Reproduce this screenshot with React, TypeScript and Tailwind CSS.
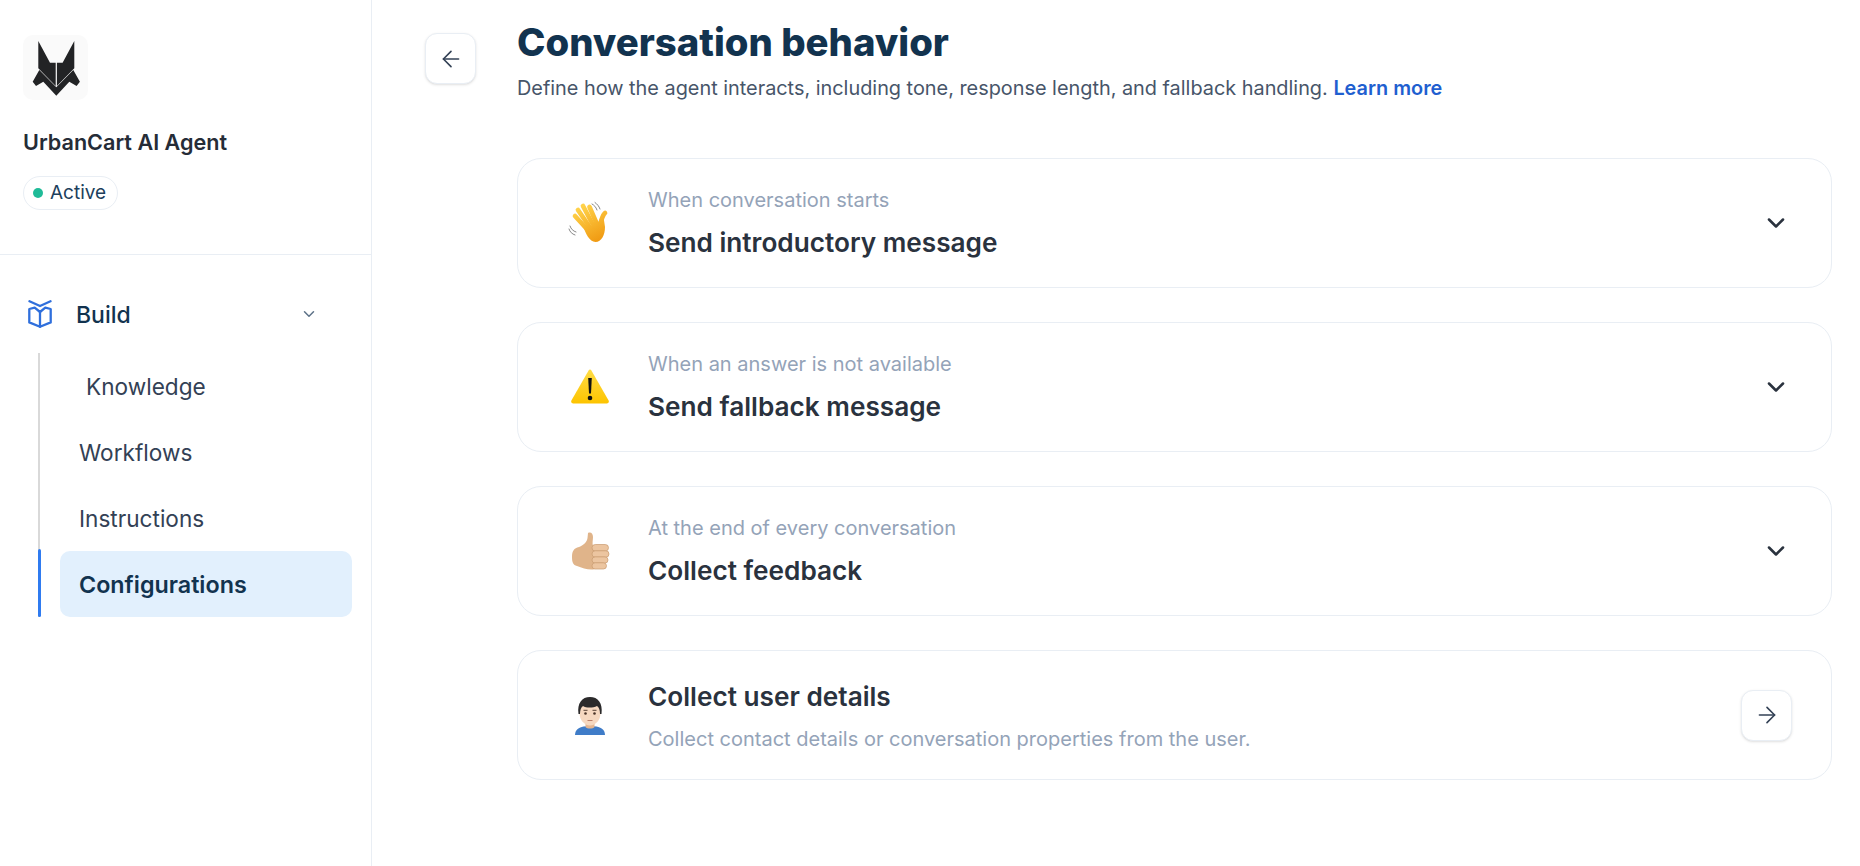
import React from "react";
import { ArrowLeft, ArrowRight, ChevronDown } from "lucide-react";

const FoxLogo = () => (
  <svg viewBox="23 35 65 65" className="h-[65px] w-[65px]">
    <path d="M38.3 41L50 62.7H55.7V86L38.3 68.3Z" fill="#222325" />
    <path d="M74.3 41L62.6 62.7H56.9V86L74.3 68.3Z" fill="#222325" />
    <path d="M32.7 81.7L39.3 70L56.3 87.3L73.3 70L79.9 81.7L76.6 86L69.3 81.7L56.3 95.7L43.3 81.7L36 86Z" fill="#222325" />
  </svg>
);

const BookIcon = () => (
  <svg viewBox="0 0 26 28" fill="none" className="h-[28px] w-[26px]" stroke="#2f6fdc" strokeWidth="2.3" strokeLinejoin="round" strokeLinecap="round">
    <path d="M2.5 1.3L13 6L23.5 1.3" />
    <path d="M7.7 7.6L2.3 9V22.4L13 26.8L23.7 22.4V9L18.3 7.6L13 12Z" />
    <path d="M13 12V26.8" />
  </svg>
);

const WaveEmoji = () => (
  <svg viewBox="0 0 44 44" className="h-[44px] w-[44px]" fill="none" strokeLinecap="round">
    <defs>
      <linearGradient id="hand" gradientUnits="userSpaceOnUse" x1="12" y1="6" x2="30" y2="40">
        <stop offset="0" stopColor="#ffd24a" />
        <stop offset="1" stopColor="#f09a12" />
      </linearGradient>
    </defs>
    <g stroke="#888" strokeWidth="1">
      <path d="M24 3C26 4 28 6 29 9" />
      <path d="M27 1.5C29 3 31 5 32 8" />
      <path d="M2 25C3 28 5 30 8 31" />
      <path d="M1 28C2 31 4 33 7 34" />
    </g>
    <g stroke="url(#hand)" strokeWidth="4.7">
      <path d="M7 15L18 27" />
      <path d="M10 9L21 25" />
      <path d="M15 5L24 22" />
      <path d="M21.5 6L28 21" />
      <path d="M37 12C34.5 14 34 18 32 23" />
    </g>
    <path d="M15 25L24 24L28 20L32 21L35.5 16L37 26C37 34 33.5 41 27.5 41C21.5 41 17.5 32 15 25Z" fill="url(#hand)" />
  </svg>
);

const WarningEmoji = () => (
  <svg viewBox="0 0 44 44" className="h-[44px] w-[44px]">
    <defs>
      <linearGradient id="warn" x1="0" y1="0" x2="0" y2="1">
        <stop offset="0" stopColor="#ffdc45" />
        <stop offset="1" stopColor="#fdc400" />
      </linearGradient>
    </defs>
    <path d="M20.6 5.5C21.3 4.3 22.7 4.3 23.4 5.5L40.6 35.6C41.3 37 40.5 38.4 39 38.4H5C3.5 38.4 2.7 37 3.4 35.6Z" fill="url(#warn)" />
    <path d="M20.2 13H23.8L23 28.5H21Z" fill="#111" />
    <circle cx="22" cy="33" r="2.3" fill="#111" />
  </svg>
);

const ThumbEmoji = () => (
  <svg viewBox="0 0 44 44" className="h-[44px] w-[44px]">
    <path d="M20 4C23 2.5 25 5 25 8C25 11 24 14 25 17L35 18V38L25 40.5C20 41 14 39 9 37C5 36 4 33 4 28C4 22 6 19 11 18C16 16 19 13 19.5 9Z" fill="#e0b48a" />
    <g fill="#ecc5a0" stroke="#c99b70" strokeWidth="0.7">
      <rect x="24" y="15.5" width="16.5" height="6.6" rx="3.3" />
      <rect x="24" y="21.8" width="17" height="6.4" rx="3.2" />
      <rect x="24" y="27.9" width="16" height="6.2" rx="3.1" />
      <rect x="24" y="33.8" width="14.5" height="6.2" rx="3.1" />
    </g>
  </svg>
);

const PersonEmoji = () => (
  <svg viewBox="0 0 44 44" className="h-[44px] w-[44px]">
    <path d="M7 42C7 36 12 33 22 33C32 33 37 36 37 42Z" fill="#3f7cc8" />
    <path d="M17.5 29H26.5V34C25 36 19 36 17.5 34Z" fill="#e3b591" />
    <ellipse cx="22" cy="20" rx="10.5" ry="12.5" fill="#f6d8c0" />
    <path d="M10.5 21C9 10 14 4 22 4C30 4 35 10 33.5 21L32 21C32 17 31 14.5 29 13C25 15 18 15 15 13C13 14.5 12 17 12 21Z" fill="#2b2a2b" />
    <circle cx="17.5" cy="20.5" r="1.3" fill="#4a3328" />
    <circle cx="26.5" cy="20.5" r="1.3" fill="#4a3328" />
    <path d="M15.5 17.3H19.5M24.5 17.3H28.5" stroke="#4a3328" strokeWidth="0.9" />
    <path d="M19.5 27.5H24.5" stroke="#b5755f" strokeWidth="0.9" />
  </svg>
);

const cards = [
  { emoji: <WaveEmoji />, sub: "When conversation starts", title: "Send introductory message" },
  { emoji: <WarningEmoji />, sub: "When an answer is not available", title: "Send fallback message" },
  { emoji: <ThumbEmoji />, sub: "At the end of every conversation", title: "Collect feedback" },
];

const App: React.FC = () => {
  return (
    <div className="flex h-[866px] overflow-hidden bg-white font-['Inter',sans-serif]">
      <aside className="w-[372px] shrink-0 border-r border-[#e9eef4]">
        <div className="h-[255px] border-b border-[#e9eef4] pl-[23px] pt-[35px]">
          <div className="h-[65px] w-[65px] rounded-[10px] bg-[#fafafa]">
            <FoxLogo />
          </div>
          <h2 className="mt-[26px] text-[21.6px] leading-[32px] font-semibold text-[#252c37]">UrbanCart AI Agent</h2>
          <div className="mt-[18px] inline-flex h-[34px] items-center gap-[7px] rounded-full border border-[#e9eef4] pl-[9px] pr-[11px] text-[19px] text-[#1d3f5c]">
            <span className="h-[10px] w-[10px] rounded-full bg-[#1fbb98]" />
            Active
          </div>
        </div>
        <div className="pl-[27px] pt-[44px]">
          <div className="flex h-[30px] items-center pr-[53px]">
            <BookIcon />
            <span className="ml-[23px] flex-1 pt-[2px] text-[23px] font-medium text-[#12334f]">Build</span>
            <ChevronDown size={18} strokeWidth={2} className="text-[#5d7288]" />
          </div>
          <div className="relative ml-[11px] mt-[24px] w-[314px] border-l-2 border-[#d9d9d9] pl-[20px]">
            <span className="absolute -left-[2.5px] bottom-0 h-[68px] w-[3px] rounded-full bg-[#2f7bf0]" />
            <div className="flex h-[66px] items-center pl-[26px] pt-[2px] text-[22.6px] text-[#334155]">Knowledge</div>
            <div className="flex h-[66px] items-center pl-[19px] pt-[2px] text-[22.6px] text-[#334155]">Workflows</div>
            <div className="flex h-[66px] items-center pl-[19px] pt-[2px] text-[22.6px] text-[#334155]">Instructions</div>
            <div className="flex h-[66px] items-center rounded-[10px] bg-[#e2f0fd] pl-[19px] pt-[2px] text-[23.3px] font-semibold text-[#12334f]">Configurations</div>
          </div>
        </div>
      </aside>
      <main className="flex flex-1 pl-[53px] pr-[28px]">
        <button className="mt-[33px] flex h-[51px] w-[51px] shrink-0 items-center justify-center rounded-[12px] border border-[#e9eef4] bg-white text-[#334155] shadow-sm">
          <ArrowLeft size={26} strokeWidth={1.5} />
        </button>
        <div className="ml-[41px] flex-1">
          <h1 className="mt-[18px] text-[38.3px] leading-[48px] font-extrabold text-[#12334f]">Conversation behavior</h1>
          <p className="mt-[9px] text-[19.87px] leading-[26px] text-[#475569]">
            Define how the agent interacts, including tone, response length, and fallback handling.{" "}
            <a className="font-semibold text-[#1f5fd0]" href="#">Learn more</a>
          </p>
          <div className="mt-[57px] flex flex-col gap-[34px]">
            {cards.map((c) => (
              <div key={c.title} className="flex h-[130px] items-center rounded-[24px] border border-[#e9eef4] pl-[50px] pr-[41px]">
                <div className="w-[44px] shrink-0">{c.emoji}</div>
                <div className="ml-[36px] flex-1">
                  <div className="text-[20px] leading-[26px] text-[#94a3b8]">{c.sub}</div>
                  <div className="mt-[14px] text-[26.2px] leading-[32px] font-semibold text-[#2a323e]">{c.title}</div>
                </div>
                <ChevronDown size={28} strokeWidth={2.2} className="text-[#2a323e]" />
              </div>
            ))}
            <div className="flex h-[130px] items-center rounded-[24px] border border-[#e9eef4] pl-[50px] pr-[39px]">
              <div className="w-[44px] shrink-0"><PersonEmoji /></div>
              <div className="ml-[36px] flex-1 pt-[2px]">
                <div className="text-[26.2px] leading-[32px] font-semibold text-[#2a323e]">Collect user details</div>
                <div className="mt-[13px] text-[20px] leading-[26px] text-[#94a3b8]">Collect contact details or conversation properties from the user.</div>
              </div>
              <button className="flex h-[51px] w-[51px] items-center justify-center rounded-[12px] border border-[#e9eef4] bg-white text-[#334155] shadow-sm">
                <ArrowRight size={26} strokeWidth={1.5} />
              </button>
            </div>
          </div>
        </div>
      </main>
    </div>
  );
};

export default App;
